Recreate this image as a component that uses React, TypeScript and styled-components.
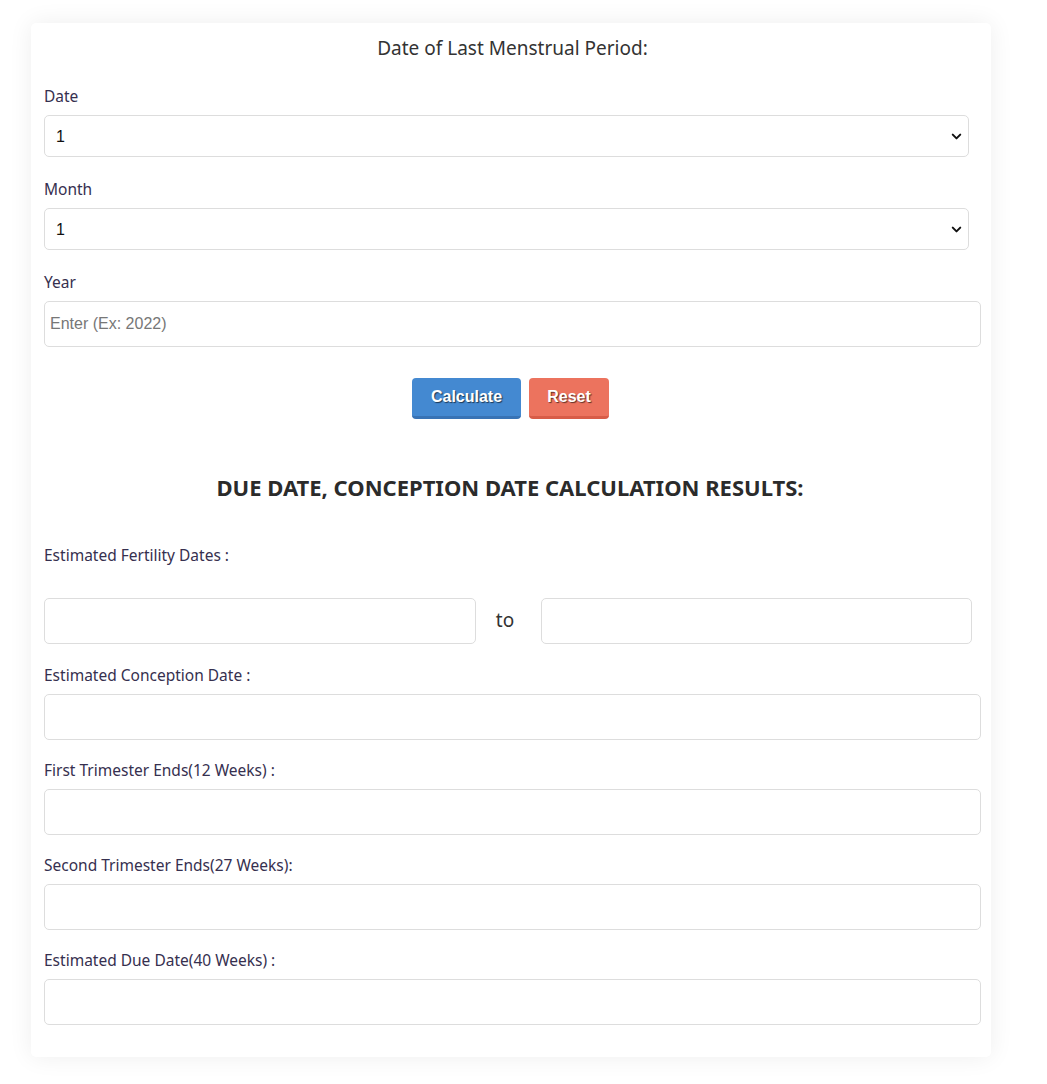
import React, { useState } from "react";
import styled, { createGlobalStyle } from "styled-components";
import { ChevronDown } from "lucide-react";

const GlobalStyle = createGlobalStyle`
  body {
    margin: 0;
    background: #fff;
    font-family: "Noto Sans", "Open Sans", sans-serif;
  }
`;

const Page = styled.div`
  padding: 23px 0 27px 31px;
`;

const Card = styled.div`
  width: 960px;
  box-sizing: border-box;
  padding: 12px 10px 32px 13px;
  background: #fff;
  border-radius: 5px;
  box-shadow: 0 0 24px rgba(0, 0, 0, 0.07);
`;

const Title = styled.div`
  text-align: center;
  font-size: 19px;
  line-height: 26px;
  color: #333;
  margin-bottom: 23px;
`;

const Field = styled.div<{ $gap?: number }>`
  margin-bottom: ${(p) => p.$gap ?? 20}px;
`;

const Label = styled.label`
  display: block;
  font-size: 15.5px;
  line-height: 24px;
  color: #36304f;
  margin-bottom: 7px;
`;

const SelectWrap = styled.div`
  position: relative;
  width: 925px;
  color: #111;
  svg {
    position: absolute;
    right: 5px;
    top: 14px;
    pointer-events: none;
  }
`;

const Select = styled.select`
  display: block;
  width: 100%;
  height: 42px;
  box-sizing: border-box;
  padding: 0 8px 0 11px;
  border: 1px solid #ddd;
  border-radius: 5px;
  background: #fff;
  appearance: none;
  font-family: "Liberation Sans", Arial, sans-serif;
  font-size: 16px;
  color: #111;
  outline: none;
`;

const Input = styled.input<{ $w?: string }>`
  display: block;
  width: ${(p) => p.$w ?? "937px"};
  height: 46px;
  box-sizing: border-box;
  padding: 0 5px;
  border: 1px solid #ddd;
  border-radius: 5px;
  background: #fff;
  font-family: "Liberation Sans", Arial, sans-serif;
  font-size: 16px;
  color: #111;
  outline: none;
  &::placeholder {
    color: #777;
  }
`;

const Buttons = styled.div`
  display: flex;
  justify-content: center;
  gap: 8px;
  margin: 31px 0 0;
  padding-right: 4px;
`;

const Button = styled.button<{ $bg: string; $edge: string; $w: number }>`
  width: ${(p) => p.$w}px;
  height: 41px;
  border: none;
  border-bottom: 3px solid ${(p) => p.$edge};
  border-radius: 4px;
  background: ${(p) => p.$bg};
  color: #fff;
  font-family: "Liberation Sans", Arial, sans-serif;
  font-weight: bold;
  font-size: 16px;
  text-shadow: 1px 1px 1px rgba(0, 0, 0, 0.6);
  cursor: pointer;
`;

const Heading = styled.h2`
  margin: 53px 0 41px;
  text-align: center;
  font-size: 22px;
  line-height: 30px;
  font-weight: bold;
  color: #2b2b2b;
  padding-right: 5px;
`;

const RangeRow = styled.div`
  display: grid;
  grid-template-columns: 1fr 65px 1fr;
  align-items: center;
  width: 928px;
  margin-top: 31px;
`;

const To = styled.span`
  text-align: center;
  padding-right: 6px;
  font-size: 19px;
  line-height: 24px;
  padding-bottom: 3px;
  color: #333;
`;

const numbers = (n: number) => Array.from({ length: n }, (_, i) => i + 1);

export default function App() {
  const [day, setDay] = useState("1");
  const [month, setMonth] = useState("1");
  const [year, setYear] = useState("");

  const reset = () => {
    setDay("1");
    setMonth("1");
    setYear("");
  };

  const results = [
    "Estimated Conception Date :",
    "First Trimester Ends(12 Weeks) :",
    "Second Trimester Ends(27 Weeks):",
    "Estimated Due Date(40 Weeks) :",
  ];

  return (
    <>
      <GlobalStyle />
      <Page>
        <Card>
          <Title>Date of Last Menstrual Period:</Title>
          <Field>
            <Label>Date</Label>
            <SelectWrap>
              <Select value={day} onChange={(e) => setDay(e.target.value)}>
                {numbers(31).map((n) => (
                  <option key={n}>{n}</option>
                ))}
              </Select>
              <ChevronDown size={15} strokeWidth={3.2} />
            </SelectWrap>
          </Field>
          <Field>
            <Label>Month</Label>
            <SelectWrap>
              <Select value={month} onChange={(e) => setMonth(e.target.value)}>
                {numbers(12).map((n) => (
                  <option key={n}>{n}</option>
                ))}
              </Select>
              <ChevronDown size={15} strokeWidth={3.2} />
            </SelectWrap>
          </Field>
          <Field $gap={0}>
            <Label>Year</Label>
            <Input
              placeholder="Enter (Ex: 2022)"
              value={year}
              onChange={(e) => setYear(e.target.value)}
            />
          </Field>
          <Buttons>
            <Button $bg="#4489d1" $edge="#3873b5" $w={109}>
              Calculate
            </Button>
            <Button $bg="#ec735e" $edge="#d85c47" $w={80} onClick={reset}>
              Reset
            </Button>
          </Buttons>

          <Heading>DUE DATE, CONCEPTION DATE CALCULATION RESULTS:</Heading>

          <Field $gap={19}>
            <Label>Estimated Fertility Dates :</Label>
            <RangeRow>
              <Input $w="100%" readOnly />
              <To>to</To>
              <Input $w="100%" readOnly />
            </RangeRow>
          </Field>
          {results.map((r, i) => (
            <Field key={r} $gap={i === results.length - 1 ? 0 : 18}>
              <Label>{r}</Label>
              <Input readOnly />
            </Field>
          ))}
        </Card>
      </Page>
    </>
  );
}
